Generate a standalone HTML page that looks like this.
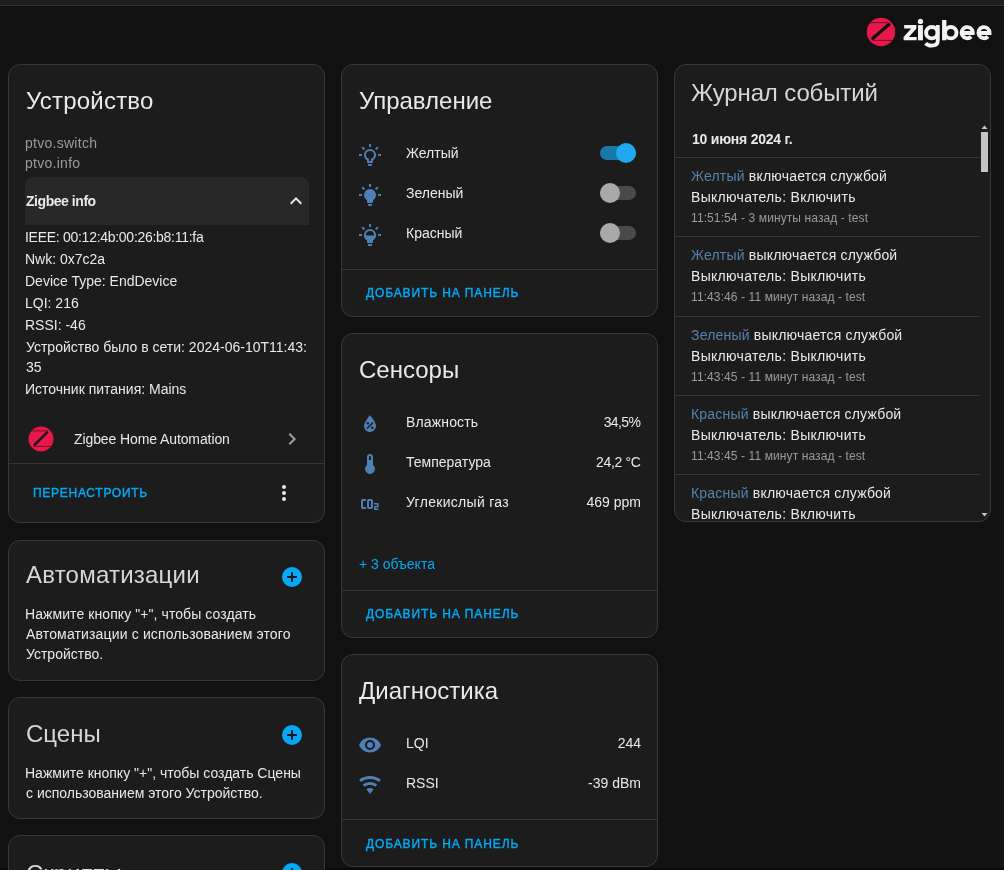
<!DOCTYPE html>
<html><head><meta charset="utf-8"><style>
html,body{margin:0;padding:0;}
body{width:1004px;height:870px;background:#111111;position:relative;overflow:hidden;font-family:"Liberation Sans",sans-serif;}
.t{position:absolute;white-space:nowrap;will-change:transform;}
</style></head><body>
<div style="position:absolute;left:0px;top:0px;width:1004px;height:5px;background:#1e1e1e"></div>
<div style="position:absolute;left:0px;top:5px;width:1004px;height:1px;background:#333"></div>
<div style="position:absolute;left:0px;top:868px;width:1004px;height:2px;background:#0a0a0a"></div>
<svg style="position:absolute;left:866px;top:17px" width="30" height="30" viewBox="0 0 30 30">
<circle cx="15" cy="15" r="14.2" fill="#e8184a"/>
<path d="M3 5.6 H22.6" stroke="#5a0c20" stroke-width="0.9" fill="none"/>
<path d="M22.9 7.4 L6.9 21.3" stroke="#111" stroke-width="3.3" stroke-linecap="round" fill="none"/>
<path d="M6.5 23.4 H26.5" stroke="#5a0c20" stroke-width="0.9" fill="none"/>
</svg>
<svg style="position:absolute;left:900px;top:14px" width="100" height="40" viewBox="900 14 100 40" fill="#f4f4f4">
<polygon points="904.2,25.1 916.4,25.1 916.4,28.4 908.9,37 916.7,37 916.7,40.3 903.6,40.3 903.6,37.1 911.2,28.5 904.2,28.5"/>
<rect x="918" y="25.1" width="4.9" height="15.2"/>
<circle cx="920.45" cy="21.4" r="2.6"/>
<circle cx="931.8" cy="32.7" r="5.7" fill="none" stroke="#f4f4f4" stroke-width="3.9"/>
<path d="M937.8 25.1 V40.5 Q937.8 45.6 931.5 45.6 Q927.6 45.6 925.6 43.2" fill="none" stroke="#f4f4f4" stroke-width="3.8"/>
<rect x="942.1" y="20" width="4.3" height="20.3"/>
<circle cx="950.8" cy="32.7" r="5.7" fill="none" stroke="#f4f4f4" stroke-width="3.9"/>
<path d="M961.6 33 H972.8 A5.6 5.6 0 1 0 971.2 36.6" fill="none" stroke="#f4f4f4" stroke-width="3.8"/>
<path d="M978.4 33 H989.6 A5.6 5.6 0 1 0 988 36.6" fill="none" stroke="#f4f4f4" stroke-width="3.8"/>
</svg>
<div style="position:absolute;left:8px;top:64px;width:317px;height:459px;background:#1c1c1c;border:1px solid #383838;border-radius:12px;box-sizing:border-box"></div>
<div class="t " style="left:26px;top:89px;font-size:24px;line-height:24px;color:#e9e9e9;font-weight:400;letter-spacing:0.2px">Устройство</div>
<div class="t " style="left:25px;top:136px;font-size:14px;line-height:14px;color:#9b9b9b;font-weight:400;letter-spacing:0.27px">ptvo.switch</div>
<div class="t " style="left:25px;top:156px;font-size:14px;line-height:14px;color:#9b9b9b;font-weight:400;letter-spacing:0.27px">ptvo.info</div>
<div style="position:absolute;left:25px;top:177px;width:284px;height:48px;background:#282828;border-radius:8px 8px 0 0"></div>
<div class="t " style="left:26px;top:194px;font-size:14px;line-height:14px;color:#e9e9e9;font-weight:700;letter-spacing:-0.45px">Zigbee info</div>
<svg style="position:absolute;left:284px;top:189px" width="24" height="24" viewBox="0 0 24 24"><path fill="#e9e9e9" d="M7.41,15.41L12,10.83L16.59,15.41L18,14L12,8L6,14L7.41,15.41Z"/></svg>
<div class="t " style="left:25px;top:230px;font-size:14px;line-height:14px;color:#e9e9e9;font-weight:400;letter-spacing:-0.28px">IEEE: 00:12:4b:00:26:b8:11:fa</div>
<div class="t " style="left:25px;top:252px;font-size:14px;line-height:14px;color:#e9e9e9;font-weight:400;letter-spacing:0px">Nwk: 0x7c2a</div>
<div class="t " style="left:25px;top:274px;font-size:14px;line-height:14px;color:#e9e9e9;font-weight:400;letter-spacing:0px">Device Type: EndDevice</div>
<div class="t " style="left:25px;top:296px;font-size:14px;line-height:14px;color:#e9e9e9;font-weight:400;letter-spacing:0px">LQI: 216</div>
<div class="t " style="left:25px;top:318px;font-size:14px;line-height:14px;color:#e9e9e9;font-weight:400;letter-spacing:0px">RSSI: -46</div>
<div class="t " style="left:26px;top:340px;font-size:14px;line-height:14px;color:#e9e9e9;font-weight:400;letter-spacing:0px">Устройство было в сети: 2024-06-10T11:43:</div>
<div class="t " style="left:26px;top:360px;font-size:14px;line-height:14px;color:#e9e9e9;font-weight:400;">35</div>
<div class="t " style="left:25px;top:382px;font-size:14px;line-height:14px;color:#e9e9e9;font-weight:400;">Источник питания: Mains</div>
<svg style="position:absolute;left:28px;top:426px" width="26" height="26" viewBox="0 0 26 26">
<circle cx="13" cy="13" r="12.5" fill="#e8184a"/>
<path d="M3.2 4.9 H20" stroke="#5a0c20" stroke-width="0.8" fill="none"/>
<path d="M19.2 6.4 L6.6 18.8" stroke="#1c1c1c" stroke-width="2.6" stroke-linecap="round" fill="none"/>
<path d="M5.8 20.3 H23" stroke="#5a0c20" stroke-width="0.8" fill="none"/>
</svg>
<div class="t " style="left:74px;top:432px;font-size:14px;line-height:14px;color:#e9e9e9;font-weight:400;letter-spacing:-0.1px">Zigbee Home Automation</div>
<svg style="position:absolute;left:280px;top:427px" width="24" height="24" viewBox="0 0 24 24"><path fill="#a0a0a0" d="M8.59,16.58L13.17,12L8.59,7.41L10,6L16,12L10,18L8.59,16.58Z"/></svg>
<div style="position:absolute;left:9px;top:463px;width:315px;height:1px;background:#363636"></div>
<div class="t " style="left:33px;top:487px;font-size:12px;line-height:12px;color:#03a9f4;font-weight:400;letter-spacing:0.72px;-webkit-text-stroke:0.4px #03a9f4">ПЕРЕНАСТРОИТЬ</div>
<svg style="position:absolute;left:272px;top:481px" width="24" height="24" viewBox="0 0 24 24"><path fill="#e9e9e9" d="M12,16A2,2 0 0,1 14,18A2,2 0 0,1 12,20A2,2 0 0,1 10,18A2,2 0 0,1 12,16M12,10A2,2 0 0,1 14,12A2,2 0 0,1 12,14A2,2 0 0,1 10,12A2,2 0 0,1 12,10M12,4A2,2 0 0,1 14,6A2,2 0 0,1 12,8A2,2 0 0,1 10,6A2,2 0 0,1 12,4Z"/></svg>
<div style="position:absolute;left:8px;top:540px;width:317px;height:141px;background:#1c1c1c;border:1px solid #383838;border-radius:12px;box-sizing:border-box"></div>
<div class="t " style="left:26px;top:563px;font-size:24px;line-height:24px;color:#d6d6d6;font-weight:400;letter-spacing:0.22px">Автоматизации</div>
<svg style="position:absolute;left:280px;top:565px" width="24" height="24" viewBox="0 0 24 24"><path fill="#03a9f4" d="M17,13H13V17H11V13H7V11H11V7H13V11H17M12,2A10,10 0 0,0 2,12A10,10 0 0,0 12,22A10,10 0 0,0 22,12A10,10 0 0,0 12,2Z"/></svg>
<div style="position:absolute;left:285px;top:569px;width:14px;height:14px;background:#fff;border-radius:50%;z-index:-1"></div>
<div class="t " style="left:25px;top:607px;font-size:14px;line-height:14px;color:#e9e9e9;font-weight:400;letter-spacing:0.08px">Нажмите кнопку "+", чтобы создать</div>
<div class="t " style="left:26px;top:627px;font-size:14px;line-height:14px;color:#e9e9e9;font-weight:400;letter-spacing:0.15px">Автоматизации с использованием этого</div>
<div class="t " style="left:26px;top:647px;font-size:14px;line-height:14px;color:#e9e9e9;font-weight:400;">Устройство.</div>
<div style="position:absolute;left:8px;top:697px;width:317px;height:122px;background:#1c1c1c;border:1px solid #383838;border-radius:12px;box-sizing:border-box"></div>
<div class="t " style="left:26px;top:722px;font-size:24px;line-height:24px;color:#d6d6d6;font-weight:400;">Сцены</div>
<svg style="position:absolute;left:280px;top:723px" width="24" height="24" viewBox="0 0 24 24"><path fill="#03a9f4" d="M17,13H13V17H11V13H7V11H11V7H13V11H17M12,2A10,10 0 0,0 2,12A10,10 0 0,0 12,22A10,10 0 0,0 22,12A10,10 0 0,0 12,2Z"/></svg>
<div class="t " style="left:25px;top:766px;font-size:14px;line-height:14px;color:#e9e9e9;font-weight:400;">Нажмите кнопку "+", чтобы создать Сцены</div>
<div class="t " style="left:26px;top:786px;font-size:14px;line-height:14px;color:#e9e9e9;font-weight:400;">с использованием этого Устройство.</div>
<div style="position:absolute;left:8px;top:835px;width:317px;height:120px;background:#1c1c1c;border:1px solid #383838;border-radius:12px;box-sizing:border-box"></div>
<div class="t " style="left:26px;top:862px;font-size:24px;line-height:24px;color:#d6d6d6;font-weight:400;">Скрипты</div>
<svg style="position:absolute;left:280px;top:861px" width="24" height="24" viewBox="0 0 24 24"><path fill="#03a9f4" d="M17,13H13V17H11V13H7V11H11V7H13V11H17M12,2A10,10 0 0,0 2,12A10,10 0 0,0 12,22A10,10 0 0,0 22,12A10,10 0 0,0 12,2Z"/></svg>
<div style="position:absolute;left:341px;top:64px;width:317px;height:253px;background:#1c1c1c;border:1px solid #383838;border-radius:12px;box-sizing:border-box"></div>
<div class="t " style="left:359px;top:89px;font-size:24px;line-height:24px;color:#e9e9e9;font-weight:400;">Управление</div>
<svg style="position:absolute;left:358px;top:143px" width="24" height="24" viewBox="0 0 24 24"><path fill="#4f80b3" d="M20,11H23V13H20V11M1,11H4V13H1V11M13,1V4H11V1H13M4.92,3.5L7.05,5.64L5.63,7.05L3.5,4.93L4.92,3.5M16.95,5.63L19.07,3.5L20.5,4.93L18.37,7.05L16.95,5.63M12,6A6,6 0 0,1 18,12C18,14.22 16.79,16.16 15,17.2V19A1,1 0 0,1 14,20H10A1,1 0 0,1 9,19V17.2C7.21,16.16 6,14.22 6,12A6,6 0 0,1 12,6M14,21V22A1,1 0 0,1 13,23H11A1,1 0 0,1 10,22V21H14M11,18H13V15.87C14.73,15.43 16,13.86 16,12A4,4 0 0,0 12,8A4,4 0 0,0 8,12C8,13.86 9.27,15.43 11,15.87V18Z"/></svg>
<div class="t " style="left:406px;top:146px;font-size:14px;line-height:14px;color:#e9e9e9;font-weight:400;">Желтый</div>
<div style="position:absolute;left:600px;top:146px;width:36px;height:14px;background:#1878a8;border-radius:7px"></div>
<div style="position:absolute;left:616px;top:143px;width:20px;height:20px;background:#1ea9f0;border-radius:50%"></div>
<svg style="position:absolute;left:358px;top:183px" width="24" height="24" viewBox="0 0 24 24"><path fill="#4f80b3" d="M12,6A6,6 0 0,1 18,12C18,14.22 16.79,16.16 15,17.2V19A1,1 0 0,1 14,20H10A1,1 0 0,1 9,19V17.2C7.21,16.16 6,14.22 6,12A6,6 0 0,1 12,6M14,21V22A1,1 0 0,1 13,23H11A1,1 0 0,1 10,22V21H14M20,11H23V13H20V11M1,11H4V13H1V11M13,1V4H11V1H13M4.92,3.5L7.05,5.64L5.63,7.05L3.5,4.93L4.92,3.5M16.95,5.63L19.07,3.5L20.5,4.93L18.37,7.05L16.95,5.63Z"/></svg>
<div class="t " style="left:406px;top:186px;font-size:14px;line-height:14px;color:#e9e9e9;font-weight:400;">Зеленый</div>
<div style="position:absolute;left:600px;top:186px;width:36px;height:14px;background:#4a4a4a;border-radius:7px"></div>
<div style="position:absolute;left:600px;top:183px;width:20px;height:20px;background:#a9a9a9;border-radius:50%"></div>
<svg style="position:absolute;left:358px;top:223px" width="24" height="24" viewBox="0 0 24 24"><defs><clipPath id="bh"><rect x="0" y="12.5" width="24" height="12"/></clipPath></defs><path fill="#4f80b3" d="M20,11H23V13H20V11M1,11H4V13H1V11M13,1V4H11V1H13M4.92,3.5L7.05,5.64L5.63,7.05L3.5,4.93L4.92,3.5M16.95,5.63L19.07,3.5L20.5,4.93L18.37,7.05L16.95,5.63M12,6A6,6 0 0,1 18,12C18,14.22 16.79,16.16 15,17.2V19A1,1 0 0,1 14,20H10A1,1 0 0,1 9,19V17.2C7.21,16.16 6,14.22 6,12A6,6 0 0,1 12,6M14,21V22A1,1 0 0,1 13,23H11A1,1 0 0,1 10,22V21H14M11,18H13V15.87C14.73,15.43 16,13.86 16,12A4,4 0 0,0 12,8A4,4 0 0,0 8,12C8,13.86 9.27,15.43 11,15.87V18Z"/><path fill="#4f80b3" clip-path="url(#bh)" d="M12,6A6,6 0 0,1 18,12C18,14.22 16.79,16.16 15,17.2V19A1,1 0 0,1 14,20H10A1,1 0 0,1 9,19V17.2C7.21,16.16 6,14.22 6,12A6,6 0 0,1 12,6M14,21V22A1,1 0 0,1 13,23H11A1,1 0 0,1 10,22V21H14M20,11H23V13H20V11M1,11H4V13H1V11M13,1V4H11V1H13M4.92,3.5L7.05,5.64L5.63,7.05L3.5,4.93L4.92,3.5M16.95,5.63L19.07,3.5L20.5,4.93L18.37,7.05L16.95,5.63Z"/></svg>
<div class="t " style="left:406px;top:226px;font-size:14px;line-height:14px;color:#e9e9e9;font-weight:400;">Красный</div>
<div style="position:absolute;left:600px;top:226px;width:36px;height:14px;background:#4a4a4a;border-radius:7px"></div>
<div style="position:absolute;left:600px;top:223px;width:20px;height:20px;background:#a9a9a9;border-radius:50%"></div>
<div style="position:absolute;left:342px;top:269px;width:315px;height:1px;background:#363636"></div>
<div class="t " style="left:366px;top:287px;font-size:12px;line-height:12px;color:#03a9f4;font-weight:400;letter-spacing:0.88px;-webkit-text-stroke:0.4px #03a9f4">ДОБАВИТЬ НА ПАНЕЛЬ</div>
<div style="position:absolute;left:341px;top:333px;width:317px;height:305px;background:#1c1c1c;border:1px solid #383838;border-radius:12px;box-sizing:border-box"></div>
<div class="t " style="left:359px;top:358px;font-size:24px;line-height:24px;color:#e9e9e9;font-weight:400;">Сенсоры</div>
<svg style="position:absolute;left:358px;top:412px" width="24" height="24" viewBox="0 0 24 24"><path fill="#4f80b3" d="M12,3.25C12,3.25 6,10 6,14C6,17.32 8.69,20 12,20A6,6 0 0,0 18,14C18,10 12,3.25 12,3.25M14.47,9.97L15.53,11.03L9.53,17.03L8.47,15.97M9.75,10A1.25,1.25 0 0,1 11,11.25A1.25,1.25 0 0,1 9.75,12.5A1.25,1.25 0 0,1 8.5,11.25A1.25,1.25 0 0,1 9.75,10M14.25,14.5A1.25,1.25 0 0,1 15.5,15.75A1.25,1.25 0 0,1 14.25,17A1.25,1.25 0 0,1 13,15.75A1.25,1.25 0 0,1 14.25,14.5Z"/></svg>
<svg style="position:absolute;left:358px;top:452px" width="24" height="24" viewBox="0 0 24 24"><path fill="#4f80b3" d="M15 13V5A3 3 0 0 0 9 5V13A5 5 0 1 0 15 13M12 4A1 1 0 0 1 13 5V8H11V5A1 1 0 0 1 12 4Z"/></svg>
<svg style="position:absolute;left:358px;top:492px" width="24" height="24" viewBox="0 0 24 24"><path fill="#4f80b3" d="M5,7A2,2 0 0,0 3,9V15A2,2 0 0,0 5,17H8V15H5V9H8V7H5M11,7A2,2 0 0,0 9,9V15A2,2 0 0,0 11,17H13A2,2 0 0,0 15,15V9A2,2 0 0,0 13,7H11M11,9H13V15H11V9M16,11V12.6H19V14H17A1,1 0 0,0 16,15V18H20.6V16.5H17.6V15.5H19.6A1,1 0 0,0 20.6,14.5V12A1,1 0 0,0 19.6,11H16Z"/></svg>
<div class="t " style="left:406px;top:415px;font-size:14px;line-height:14px;color:#e9e9e9;font-weight:400;letter-spacing:0.15px">Влажность</div>
<div class="t " style="left:0px;top:415px;font-size:14px;line-height:14px;color:#e9e9e9;font-weight:400;width:640.4px;text-align:right;letter-spacing:-0.6px">34,5%</div>
<div class="t " style="left:406px;top:455px;font-size:14px;line-height:14px;color:#e9e9e9;font-weight:400;letter-spacing:0px">Температура</div>
<div class="t " style="left:0px;top:455px;font-size:14px;line-height:14px;color:#e9e9e9;font-weight:400;width:640.7px;text-align:right;letter-spacing:-0.3px">24,2 °C</div>
<div class="t " style="left:406px;top:495px;font-size:14px;line-height:14px;color:#e9e9e9;font-weight:400;letter-spacing:0.3px">Углекислый газ</div>
<div class="t " style="left:0px;top:495px;font-size:14px;line-height:14px;color:#e9e9e9;font-weight:400;width:641px;text-align:right;letter-spacing:0px">469 ppm</div>
<div class="t " style="left:359px;top:557px;font-size:14px;line-height:14px;color:#03a9f4;font-weight:400;">+ 3 объекта</div>
<div style="position:absolute;left:342px;top:590px;width:315px;height:1px;background:#363636"></div>
<div class="t " style="left:366px;top:608px;font-size:12px;line-height:12px;color:#03a9f4;font-weight:400;letter-spacing:0.88px;-webkit-text-stroke:0.4px #03a9f4">ДОБАВИТЬ НА ПАНЕЛЬ</div>
<div style="position:absolute;left:341px;top:654px;width:317px;height:213px;background:#1c1c1c;border:1px solid #383838;border-radius:12px;box-sizing:border-box"></div>
<div class="t " style="left:359px;top:679px;font-size:24px;line-height:24px;color:#e9e9e9;font-weight:400;">Диагностика</div>
<svg style="position:absolute;left:358px;top:733px" width="24" height="24" viewBox="0 0 24 24"><path fill="#4f80b3" d="M12,9A3,3 0 0,0 9,12A3,3 0 0,0 12,15A3,3 0 0,0 15,12A3,3 0 0,0 12,9M12,17A5,5 0 0,1 7,12A5,5 0 0,1 12,7A5,5 0 0,1 17,12A5,5 0 0,1 12,17M12,4.5C7,4.5 2.73,7.61 1,12C2.73,16.39 7,19.5 12,19.5C17,19.5 21.27,16.39 23,12C21.27,7.61 17,4.5 12,4.5Z"/></svg>
<svg style="position:absolute;left:358px;top:773px" width="24" height="24" viewBox="0 0 24 24"><path fill="#4f80b3" d="M12,21L15.6,16.2C14.6,15.45 13.35,15 12,15C10.65,15 9.4,15.45 8.4,16.2L12,21M12,3C7.95,3 4.21,4.34 1.2,6.6L3,9C5.5,7.12 8.62,6 12,6C15.38,6 18.5,7.12 21,9L22.8,6.6C19.79,4.34 16.05,3 12,3M12,9C9.3,9 6.81,9.89 4.8,11.4L6.6,13.8C8.1,12.67 9.97,12 12,12C14.03,12 15.9,12.67 17.4,13.8L19.2,11.4C17.19,9.89 14.7,9 12,9Z"/></svg>
<div class="t " style="left:406px;top:736px;font-size:14px;line-height:14px;color:#e9e9e9;font-weight:400;">LQI</div>
<div class="t " style="left:406px;top:776px;font-size:14px;line-height:14px;color:#e9e9e9;font-weight:400;">RSSI</div>
<div class="t " style="left:0px;top:736px;font-size:14px;line-height:14px;color:#e9e9e9;font-weight:400;width:641px;text-align:right">244</div>
<div class="t " style="left:0px;top:776px;font-size:14px;line-height:14px;color:#e9e9e9;font-weight:400;width:641px;text-align:right">-39 dBm</div>
<div style="position:absolute;left:342px;top:819px;width:315px;height:1px;background:#363636"></div>
<div class="t " style="left:366px;top:838px;font-size:12px;line-height:12px;color:#03a9f4;font-weight:400;letter-spacing:0.88px;-webkit-text-stroke:0.4px #03a9f4">ДОБАВИТЬ НА ПАНЕЛЬ</div>
<div style="position:absolute;left:674px;top:64px;width:317px;height:458px;background:#1c1c1c;border:1px solid #383838;border-radius:12px;box-sizing:border-box"></div>
<div class="t " style="left:691px;top:81px;font-size:24px;line-height:24px;color:#d6d6d6;font-weight:400;letter-spacing:-0.14px">Журнал событий</div>
<div class="t " style="left:692px;top:132px;font-size:14px;line-height:14px;color:#e9e9e9;font-weight:700;letter-spacing:-0.23px">10 июня 2024 г.</div>
<div style="position:absolute;left:675px;top:122px;width:315px;height:399px;overflow:hidden">
<div style="position:absolute;left:0px;top:35px;width:305px;height:1px;background:#363636"></div>
<div class="t " style="left:16px;top:47px;font-size:14px;line-height:14px;color:#e9e9e9;font-weight:400;letter-spacing:0.2px"><span style="color:#5882ad">Желтый</span> включается службой</div>
<div class="t " style="left:16px;top:68px;font-size:14px;line-height:14px;color:#e9e9e9;font-weight:400;letter-spacing:0.3px">Выключатель: Включить</div>
<div class="t " style="left:16px;top:90px;font-size:12px;line-height:12px;color:#9b9b9b;font-weight:400;letter-spacing:0.1px">11:51:54 - 3 минуты назад - test</div>
<div style="position:absolute;left:0px;top:114px;width:305px;height:1px;background:#363636"></div>
<div class="t " style="left:16px;top:126px;font-size:14px;line-height:14px;color:#e9e9e9;font-weight:400;letter-spacing:0.2px"><span style="color:#5882ad">Желтый</span> выключается службой</div>
<div class="t " style="left:16px;top:147px;font-size:14px;line-height:14px;color:#e9e9e9;font-weight:400;letter-spacing:0.3px">Выключатель: Выключить</div>
<div class="t " style="left:16px;top:169px;font-size:12px;line-height:12px;color:#9b9b9b;font-weight:400;letter-spacing:0.1px">11:43:46 - 11 минут назад - test</div>
<div style="position:absolute;left:0px;top:194px;width:305px;height:1px;background:#363636"></div>
<div class="t " style="left:16px;top:206px;font-size:14px;line-height:14px;color:#e9e9e9;font-weight:400;letter-spacing:0.2px"><span style="color:#5882ad">Зеленый</span> выключается службой</div>
<div class="t " style="left:16px;top:227px;font-size:14px;line-height:14px;color:#e9e9e9;font-weight:400;letter-spacing:0.3px">Выключатель: Выключить</div>
<div class="t " style="left:16px;top:249px;font-size:12px;line-height:12px;color:#9b9b9b;font-weight:400;letter-spacing:0.1px">11:43:45 - 11 минут назад - test</div>
<div style="position:absolute;left:0px;top:273px;width:305px;height:1px;background:#363636"></div>
<div class="t " style="left:16px;top:285px;font-size:14px;line-height:14px;color:#e9e9e9;font-weight:400;letter-spacing:0.2px"><span style="color:#5882ad">Красный</span> выключается службой</div>
<div class="t " style="left:16px;top:306px;font-size:14px;line-height:14px;color:#e9e9e9;font-weight:400;letter-spacing:0.3px">Выключатель: Выключить</div>
<div class="t " style="left:16px;top:328px;font-size:12px;line-height:12px;color:#9b9b9b;font-weight:400;letter-spacing:0.1px">11:43:45 - 11 минут назад - test</div>
<div style="position:absolute;left:0px;top:352px;width:305px;height:1px;background:#363636"></div>
<div class="t " style="left:16px;top:364px;font-size:14px;line-height:14px;color:#e9e9e9;font-weight:400;letter-spacing:0.2px"><span style="color:#5882ad">Красный</span> включается службой</div>
<div class="t " style="left:16px;top:385px;font-size:14px;line-height:14px;color:#e9e9e9;font-weight:400;letter-spacing:0.3px">Выключатель: Включить</div>
</div>
<div style="position:absolute;left:981px;top:132px;width:7px;height:40px;background:#c4c4c4"></div>
<svg style="position:absolute;left:981px;top:125px" width="7" height="5" viewBox="0 0 7 5"><path d="M3.5 0.5 L6.5 4 H0.5Z" fill="#c8c8c8"/></svg>
<svg style="position:absolute;left:981px;top:512px" width="7" height="5" viewBox="0 0 7 5"><path d="M3.5 4.5 L6.5 1 H0.5Z" fill="#c8c8c8"/></svg>
</body></html>
